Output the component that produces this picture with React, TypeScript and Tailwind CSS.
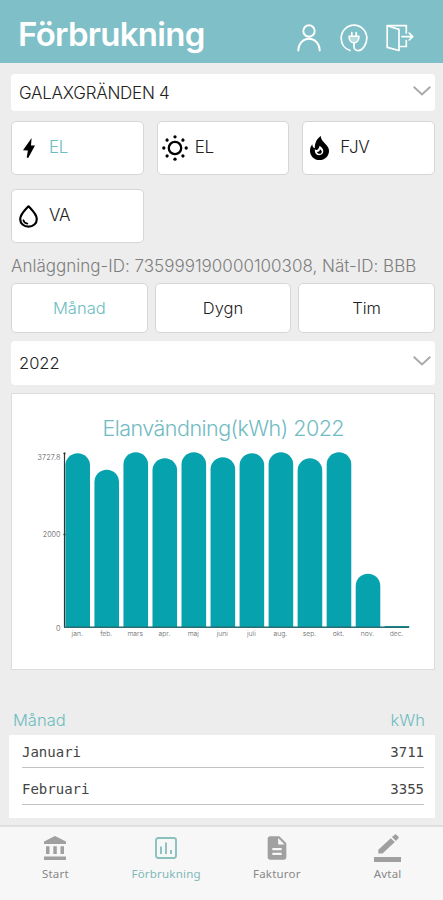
import React, { useState } from "react";
import { MdDescription } from "react-icons/md";

type IconProps = { className?: string };

const UserIcon = ({ className }: IconProps) => (
  <svg viewBox="0 0 24 28" className={className} fill="none" stroke="currentColor" strokeWidth="1.9" strokeLinecap="round">
    <circle cx="12" cy="7" r="5.7" />
    <path d="M1.3 26.6C1.3 20 6 14.8 12 14.8S22.700 20 22.700 26.600" />
  </svg>
);

const PlugIcon = ({ className }: IconProps) => (
  <svg viewBox="0 0 28 28" className={className} fill="none" stroke="currentColor" strokeWidth="1.7" strokeLinecap="round">
    <path d="M10 26.500C4.600 24.800 1.200 19.900 1.200 14.200 1.200 7 6.900 1.200 14 1.200s12.800 5.800 12.800 13c0 6.300-4.200 12.300-8.800 12.400-2.300 0-4-1.700-4-3.900V19" />
    <path d="M9 12.300h10c0 4-2 6.700-5 6.700s-5-2.700-5-6.700z" fill="currentColor" fillOpacity=".45" strokeWidth="1.5" strokeLinejoin="round" />
    <path d="M11.800 8.700v3.300M16.200 8.700v3.300" />
  </svg>
);

const ExitIcon = ({ className }: IconProps) => (
  <svg viewBox="0 0 28 28" className={className} fill="none" stroke="currentColor" strokeWidth="1.7" strokeLinejoin="round" strokeLinecap="round">
    <path d="M1.200 1.800 13 5.400V26.500L1.200 23.400z" />
    <path d="M1.200 1.600H20.300V9M20.300 16.500V22.500H13.500" />
    <path d="M16 12.600H26.500M23.200 9.200 26.700 12.600 23.200 16" />
  </svg>
);

const BoltIcon = ({ className }: IconProps) => (
  <svg viewBox="0 0 12 20" className={className} fill="currentColor">
    <path d="M8.600 0 8 7.500 12 7.600 5.200 20 3.700 19.600 4.900 12.500 0 12.300z" />
  </svg>
);

const SunIcon = ({ className }: IconProps) => (
  <svg viewBox="0 0 26 26" className={className} fill="currentColor">
    <circle cx="13" cy="13" r="6.200" fill="none" stroke="currentColor" strokeWidth="2.300" />
    {[0, 45, 90, 135, 180, 225, 270, 315].map((deg) => (
      <circle key={deg} cx="13" cy="1.800" r="1.650" transform={`rotate(${deg} 13 13)`} />
    ))}
  </svg>
);

const FlameIcon = ({ className }: IconProps) => (
  <svg viewBox="0 0 19 24" className={className} fill="currentColor" fillRule="evenodd">
    <path d="M10.900 0C10.600 4 14.600 6.500 17 9.700c1.300 1.700 2 3.300 2 5.200 0 5.200-4.200 9.100-9.500 9.100S0 20 0 14.900c0-2.500.8-4.700 2.300-6.600.1 2.200.9 3.600 2.500 3.900C4.600 7 7 2.300 10.900 0zM9.600 9.800c-.4 2-1.100 3.200-2.200 4-.8.600-1.800.200-2.500-.5-.4 2.900.9 5.900 4.200 5.900 2.700 0 4.200-1.700 4.200-3.900 0-2.300-1.500-3.900-3.700-5.500zM9.900 13.300c1.500.8 2.100 1.900 1.800 3-.3 1-1.100 1.500-2.200 1.500-1.200 0-2.200-.7-2.600-1.800 1.900-.1 3-.8 3-2.700z" />
  </svg>
);

const DropIcon = ({ className }: IconProps) => (
  <svg viewBox="0 0 19 23" className={className} fill="none" stroke="currentColor" strokeWidth="2.200" strokeLinejoin="round" strokeLinecap="round">
    <path d="M9.500 1.300C6.500 4.500 1.200 9.300 1.200 14c0 4.500 3.600 7.700 8.300 7.700s8.300-3.200 8.300-7.700c0-4.700-5.300-9.500-8.300-12.700z" />
    <path d="M4.400 15.200c.6 2 2 3.100 4 3.400" strokeWidth="1.700" />
  </svg>
);

const BankIcon = ({ className }: IconProps) => (
  <svg viewBox="0 0 22 24" className={className} fill="currentColor">
    <path d="M11 0 22 5.600V8H0V5.600zM2 10.300H5.500V18H2zM9.300 10.300H12.800V18H9.300zM16.500 10.300H20V18H16.500zM0 20.500H22V24H0z" />
  </svg>
);

const ChartIcon = ({ className }: IconProps) => (
  <svg viewBox="0 0 22 22" className={className} fill="none" stroke="currentColor">
    <rect x="1" y="1" width="20" height="20" rx="2.200" strokeWidth="1.900" />
    <path d="M6 9.500V17M11 5.500V17M16 13V17" strokeWidth="1.900" />
  </svg>
);

const SignIcon = ({ className }: IconProps) => (
  <svg viewBox="0 0 27 28" className={className} fill="currentColor">
    <path d="M4.300 15.700 16.800 4.200 20.800 8.100 8.500 19.600H4.300zM18 3.100 20.600.7a1.300 1.300 0 0 1 1.800 0L24.300 2.600a1.300 1.300 0 0 1 0 1.800L21.900 7z" />
    <path d="M0 23H27V28H0z" />
  </svg>
);

const Chevron = () => (
  <svg viewBox="0 0 18 10" className="h-[10px] w-[18px]" fill="none" stroke="#a9a9a9" strokeWidth="1.900">
    <path d="M.7.8 9 8.500 17.300.8" />
  </svg>
);

const energyTypes = [
  { label: "EL", icon: <BoltIcon className="-ml-px h-5 w-3" /> },
  { label: "EL", icon: <SunIcon className="h-[26px] w-[26px] shrink-0" /> },
  { label: "FJV", icon: <FlameIcon className="-ml-px h-6 w-[19px]" /> },
  { label: "VA", icon: <DropIcon className="-ml-px h-[23px] w-[19px]" /> },
];

const bars = [
  { label: "jan.", height: 174 },
  { label: "feb.", height: 157.500 },
  { label: "mars", height: 175 },
  { label: "apr.", height: 169 },
  { label: "maj", height: 175 },
  { label: "juni", height: 170 },
  { label: "juli", height: 174 },
  { label: "aug.", height: 175 },
  { label: "sep.", height: 169 },
  { label: "okt.", height: 175 },
  { label: "nov.", height: 53.500 },
  { label: "dec.", height: 1.200 },
];

const rows = [
  { month: "Januari", value: 3711 },
  { month: "Februari", value: 3355 },
];

const tabs = [
  { label: "Start", icon: <BankIcon className="h-6 w-[22px]" /> },
  { label: "Förbrukning", icon: <ChartIcon className="h-[22px] w-[22px]" />, active: true },
  { label: "Fakturor", icon: <MdDescription className="h-[28px] w-[28px]" /> },
  { label: "Avtal", icon: <SignIcon className="h-[28px] w-[27px]" /> },
];

function BarChart() {
  return (
    <svg viewBox="0 0 422 275" className="block h-[275px] w-[422px] font-['Inter',sans-serif]">
      <text x="211.500" y="41.500" textAnchor="middle" fontSize="21.500" fontWeight="300" textLength="242" fill="#72bbc2">
        Elanvändning(kWh) 2022
      </text>
      {bars.map((bar, i) => {
        const x = 53.400 + i * 29.030;
        const y = 233.200 - bar.height;
        const r = bar.height > 12.300 ? 12.300 : 0;
        return (
          <g key={bar.label}>
            <path d={`M${x} 233.500V${y + r}a12.300 ${r} 0 0 1 24.600 0V233.500z`} fill="#06a2ad" />
            <text x={x + 11.800} y="241.700" textAnchor="middle" fontSize="6.800" fill="#666">
              {bar.label}
            </text>
          </g>
        );
      })}
      <path d="M52.500 58.500V233.500" stroke="#333" strokeWidth="1.200" />
      <path d="M52 233.300H397" stroke="#286d72" strokeWidth="1.500" />
      <path d="M51.500 59.500h2M51.500 140.500h2" stroke="#333" strokeWidth="1.500" />
      <g fontSize="7.200" fill="#555" textAnchor="end">
        <text x="48.500" y="65.500" textLength="23">3727.8</text>
        <text x="48.500" y="143">2000</text>
        <text x="48.500" y="236.500">0</text>
      </g>
    </svg>
  );
}

export default function App() {
  const [energy, setEnergy] = useState(0);
  const [period, setPeriod] = useState("Månad");

  return (
    <div className="flex h-[900px] w-[443px] flex-col overflow-hidden bg-[#ededed] font-['Inter',sans-serif] font-light text-[#222]">
      <header className="flex h-[63px] shrink-0 items-start justify-between bg-[#7fbfc7] pr-[29px] pl-[18px] text-white">
        <h1 className="mt-[11px] text-[33px] leading-[46px] font-semibold tracking-[-0.7px] whitespace-nowrap">Förbrukning</h1>
        <div className="mt-6 flex items-start">
          <UserIcon className="mr-[19px] h-[28px] w-[24px]" />
          <PlugIcon className="mr-[18px] h-[28px] w-[28px]" />
          <ExitIcon className="h-[28px] w-[28px]" />
        </div>
      </header>

      <main className="flex flex-1 flex-col overflow-hidden">
        <button className="mt-[11px] mr-2 ml-[11px] flex h-[37px] shrink-0 items-center justify-between rounded bg-white pr-1 pl-2">
          <span className="pt-[2px] text-[17px] tracking-[-0.25px]">GALAXGRÄNDEN 4</span>
          <span className="-mt-1"><Chevron /></span>
        </button>

        <div className="mt-[10px] mr-2 ml-[11px] grid shrink-0 grid-cols-3 gap-x-[13px] gap-y-[14px]">
          {energyTypes.map((type, i) => (
            <button
              key={i}
              onClick={() => setEnergy(i)}
              className="flex h-[54px] items-center rounded-[5px] border border-[#d6d6d6] bg-white"
            >
              <span className="ml-[3px] flex w-[28px] justify-center text-black">{type.icon}</span>
              <span className={`ml-[6px] text-[17px] tracking-[-0.3px] ${energy === i ? "text-[#6dbcc0]" : ""}`}>
                {type.label}
              </span>
            </button>
          ))}
        </div>

        <p className="mt-[11px] ml-[11px] shrink-0 text-[17px] leading-6 tracking-[0.01px] whitespace-nowrap text-[#7d7d7d]">
          Anläggning-ID: 735999190000100308, Nät-ID: BBB
        </p>

        <div className="mt-[5px] mr-2 ml-[11px] grid shrink-0 grid-cols-3 gap-[7px]">
          {["Månad", "Dygn", "Tim"].map((name) => (
            <button
              key={name}
              onClick={() => setPeriod(name)}
              className={`h-[50px] rounded-[5px] border border-[#d6d6d6] bg-white text-[16.500px] ${period === name ? "text-[#6dbcc0]" : ""}`}
            >
              {name}
            </button>
          ))}
        </div>

        <button className="mt-2 mr-2 ml-[11px] flex h-[44px] shrink-0 items-center justify-between rounded bg-white pr-1 pl-2">
          <span className="text-[16.500px]">2022</span>
          <span className="-mt-1"><Chevron /></span>
        </button>

        <section className="mt-2 mr-2 ml-[11px] h-[277px] shrink-0 border border-[#dcdcdc] bg-white">
          <BarChart />
        </section>

        <div className="mt-[38px] mr-[18px] ml-[13px] flex shrink-0 justify-between text-[16.500px] leading-6 text-[#6dbcc0]">
          <span>Månad</span>
          <span>kWh</span>
        </div>
        <div className="mt-[3px] mr-2 ml-[9px] h-[83px] shrink-0 bg-white pr-[11px] pl-[13px] font-['DejaVu_Sans_Mono',monospace] text-[14px] text-[#444]">
          {rows.map((row) => (
            <div key={row.month} className="flex h-[37px] items-end justify-between border-b border-[#c2c2c2] pb-[5px] leading-[20px] first:h-[33px]">
              <span>{row.month}</span>
              <span>{row.value}</span>
            </div>
          ))}
        </div>
      </main>

      <nav className="grid h-[75px] shrink-0 grid-cols-4 border-t-2 border-[#e0e0e0] bg-[#f7f7f7]">
        {tabs.map((tab) => (
          <a
            key={tab.label}
            className={`flex flex-col items-center font-['Noto_Sans',sans-serif] text-[11.500px] font-normal tracking-[0.2px] ${tab.active ? "text-[#7fb9b7]" : "text-[#888]"}`}
          >
            <span className={`mt-[6px] flex h-[30px] items-center ${tab.active ? "text-[#8ac0be]" : "text-[#a0a0a0]"}`}>{tab.icon}</span>
            <span className="mt-[2px] leading-[18px]">{tab.label}</span>
          </a>
        ))}
      </nav>
    </div>
  );
}
